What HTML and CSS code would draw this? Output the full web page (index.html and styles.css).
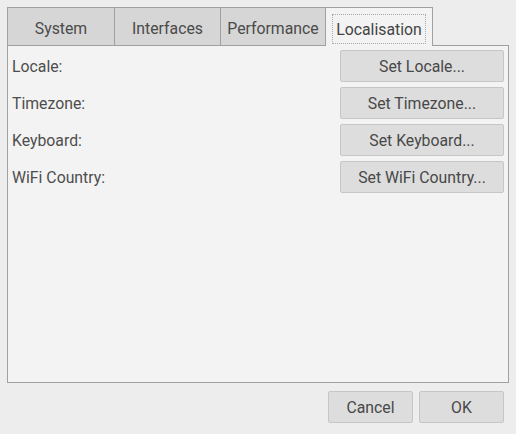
FILE: index.html
```html
<!DOCTYPE html>
<html>
<head>
<meta charset="utf-8">
<link rel="stylesheet" href="styles.css">
</head>
<body>
<div class="dialog">
  <div class="tabs">
    <div class="tab t1">System</div>
    <div class="tab t2">Interfaces</div>
    <div class="tab t3">Performance</div>
    <div class="tab active"><span class="focus">Localisation</span></div>
    <div class="tab-fill"></div>
  </div>
  <div class="panel">
    <div class="row"><span class="label">Locale:</span><button class="btn wide">Set Locale...</button></div>
    <div class="row"><span class="label">Timezone:</span><button class="btn wide">Set Timezone...</button></div>
    <div class="row"><span class="label">Keyboard:</span><button class="btn wide">Set Keyboard...</button></div>
    <div class="row"><span class="label">WiFi Country:</span><button class="btn wide">Set WiFi Country...</button></div>
  </div>
  <div class="actions">
    <button class="btn small">Cancel</button>
    <button class="btn small">OK</button>
  </div>
</div>
</body>
</html>
```
FILE: styles.css
```css
html, body {
  margin: 0;
  padding: 0;
  background: #ededed;
}
body {
  font-family: Roboto, "Liberation Sans", sans-serif;
  font-size: 15.8px;
  color: #4a4a4a;
  width: 516px;
  height: 434px;
  overflow: hidden;
}
.dialog {
  padding: 7px 7px 0 7px;
}
.tabs {
  display: flex;
  height: 39px;
}
.tab {
  box-sizing: border-box;
  height: 39px;
  border: 1px solid #a0a0a0;
  border-right: none;
  background: #d6d6d6;
  display: flex;
  align-items: center;
  justify-content: center;
  padding-top: 4px;
  color: #4a4a4a;
}
.t1 { width: 107px; }
.t2 { width: 106px; }
.t3 { width: 105px; }
.tab.active {
  width: 108px;
  border-right: 1px solid #a0a0a0;
  border-bottom: none;
  background: #f3f3f3;
  padding: 6px 6px 2px 6px;
  align-items: stretch;
  justify-content: stretch;
  color: #444444;
}
.focus {
  flex: 1;
  border: 1px dotted #a8a8a8;
  display: flex;
  align-items: center;
  justify-content: center;
  padding-top: 1px;
}
.tab-fill {
  flex: 1;
  border-bottom: 1px solid #a0a0a0;
}
.panel {
  box-sizing: border-box;
  height: 337px;
  background: #f3f3f3;
  border: 1px solid #a0a0a0;
  border-top: none;
  padding: 4px 4px 0 4px;
  display: flex;
  flex-direction: column;
  gap: 5px;
}
.row {
  display: flex;
  align-items: center;
  justify-content: space-between;
  height: 32px;
}
.label {
  color: #4d4d4d;
}
.btn {
  box-sizing: border-box;
  font-family: inherit;
  font-size: 15.8px;
  color: #484848;
  background: #dddddd;
  border: 1px solid #c6c6c6;
  border-radius: 2px;
  height: 32px;
  padding: 0;
  margin: 0;
}
.wide { width: 164px; }
.actions {
  display: flex;
  justify-content: flex-end;
  gap: 6px;
  padding: 8px 5px 0 0;
}
.small { width: 85px; }
```
